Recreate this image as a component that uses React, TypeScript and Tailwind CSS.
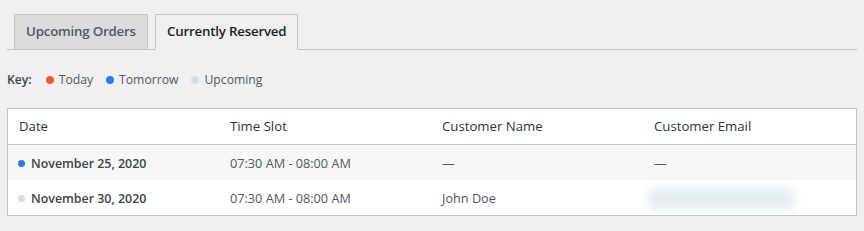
import React from "react";

const font = { fontFamily: '"Open Sans", "Noto Sans", sans-serif' };

function Dot({ color }: { color: string }) {
  return <span className={`inline-block w-[8px] h-[8px] rounded-full ${color}`} />;
}

export default function App() {
  const rows = [
    {
      dot: "bg-[#2d7be5]",
      date: "November 25, 2020",
      slot: "07:30 AM - 08:00 AM",
      name: "—",
      email: "—",
      bg: "bg-[#f6f7f7]",
    },
    {
      dot: "bg-[#d3e0e3]",
      date: "November 30, 2020",
      slot: "07:30 AM - 08:00 AM",
      name: "John Doe",
      email: null,
      bg: "bg-white",
    },
  ];
  return (
    <div className="min-h-[231px] w-[864px] bg-[#f0f0f1] pt-[15px] px-[7px] text-[#3c434a]" style={font}>
      <div className="flex items-end gap-[7px] pl-[7px] border-b border-[#c3c4c7] h-[35px]">
        <div className="h-[36px] -mb-px flex items-center px-[11px] bg-[#dcdcde] border border-[#c3c4c7] text-[13.3px] font-semibold text-[#50575e] tracking-[-0.2px]">
          Upcoming Orders
        </div>
        <div className="h-[36px] -mb-px flex items-center px-[11px] bg-[#f0f0f1] border border-[#c3c4c7] border-b-[#f0f0f1] text-[13.3px] font-semibold text-[#1d2327] tracking-[-0.2px]">
          Currently Reserved
        </div>
      </div>
      <div className="flex items-center h-[20px] mt-[20px] text-[12.2px] text-[#50575e]">
        <span className="font-semibold text-[#3c434a] mr-[14px]">Key:</span>
        <span className="flex items-center gap-[5px] mr-[13px]">
          <Dot color="bg-[#e65a3e]" />
          Today
        </span>
        <span className="flex items-center gap-[5px] mr-[13px]">
          <Dot color="bg-[#2d7be5]" />
          Tomorrow
        </span>
        <span className="flex items-center gap-[5px]">
          <Dot color="bg-[#d3e0e3]" />
          Upcoming
        </span>
      </div>
      <div className="mt-[18px] border border-[#c3c4c7] bg-white">
        <div className="grid grid-cols-4 h-[36px] items-center border-b border-[#c3c4c7] text-[13.2px] text-[#2c3338]">
          <div className="pl-[11px]">Date</div>
          <div className="pl-[10px]">Time Slot</div>
          <div className="pl-[10px]">Customer Name</div>
          <div className="pl-[10px]">Customer Email</div>
        </div>
        {rows.map((r, i) => (
          <div key={i} className={`grid grid-cols-4 h-[35px] pt-[3px] items-center text-[12.7px] text-[#50575e] ${r.bg}`}>
            <div className="pl-[10px] flex items-center gap-[6px] font-semibold text-[12.4px] text-[#3c434a]">
              <span className={`inline-block w-[7px] h-[7px] rounded-full ${r.dot}`} />
              {r.date}
            </div>
            <div className="pl-[10px]">{r.slot}</div>
            <div className="pl-[10px]">{r.name}</div>
            <div className="pl-[4px] relative flex items-center">
              {r.email ? (
                <span className="pl-[6px]">{r.email}</span>
              ) : (
                <div className="w-[146px] h-[22px] bg-[#e6edf1] rounded-[6px] blur-[5px]" />
              )}
            </div>
          </div>
        ))}
      </div>
    </div>
  );
}
